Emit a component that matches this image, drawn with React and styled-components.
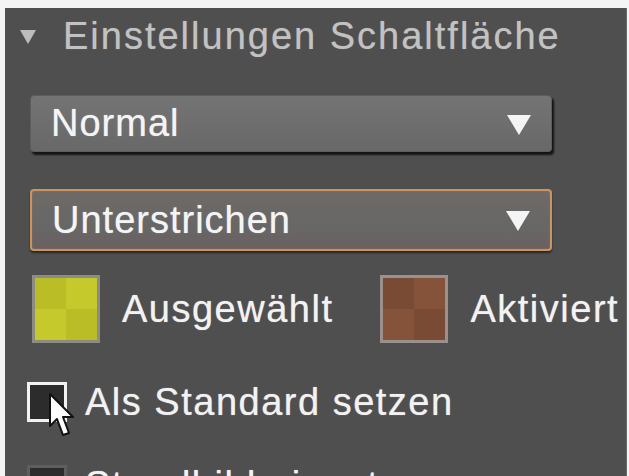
import styled, { createGlobalStyle } from "styled-components";

const Global = createGlobalStyle`
  html, body {
    margin: 0;
    background: #f4f4f4;
    overflow: hidden;
  }
  body {
    padding: 8px 0 0 5px;
    font-family: "Liberation Sans", Arial, sans-serif;
  }
`;

const Panel = styled.div`
  width: 621px;
  height: 468px;
  background: #4f4f4f;
  border-right: 1px solid #6a6a6a;
  display: flex;
  flex-direction: column;
  overflow: hidden;
  & > * {
    flex: none;
  }
`;

const Header = styled.div`
  height: 56px;
  display: flex;
  align-items: center;
  padding-left: 15px;
  gap: 27px;
  color: #c2c2c2;
  font-size: 38px;
  letter-spacing: 2px;
  text-shadow: 0 0 1px rgba(200, 200, 200, 0.5);
`;

const Caret = styled.span`
  width: 0;
  height: 0;
  border-left: 8px solid transparent;
  border-right: 8px solid transparent;
  border-top: 14px solid #bdbdbd;
  margin-top: 2px;
  flex: none;
`;

const Select = styled.div`
  margin: ${(p) => p.top}px 0 0 25px;
  width: 522px;
  height: ${(p) => p.h}px;
  box-sizing: border-box;
  display: flex;
  align-items: center;
  justify-content: space-between;
  padding: 0 20px 0 20px;
  border-radius: 4px;
  color: #f4f4f4;
  font-size: 38px;
  letter-spacing: 1px;
  text-shadow: 0 0 1px rgba(255, 255, 255, 0.6);
  ${(p) =>
    p.active
      ? `
    border: 2px solid #c9955f;
    background: linear-gradient(#6e6a66, #676767 60%, #6b6060);
    box-shadow: 0 2px 2px rgba(0,0,0,0.5), inset 0 0 2px rgba(200,150,100,0.4);
  `
      : `
    border: 1px solid #5c5c5c;
    background: linear-gradient(#747474, #686868);
    box-shadow: 2px 3px 2px rgba(0,0,0,0.75);
  `}
`;

const SelectArrow = styled.span`
  width: 0;
  height: 0;
  border-left: 12px solid transparent;
  border-right: 12px solid transparent;
  border-top: 20px solid #f4f4f4;
  margin-top: 2px;
`;

const SwatchRow = styled.div`
  margin: 24px 0 0 27px;
  display: flex;
  align-items: center;
  height: 68px;
`;

const Swatch = styled.div`
  width: 68px;
  height: 68px;
  box-sizing: border-box;
  border: 3px solid ${(p) => p.edge};
  background: conic-gradient(
    ${(p) => p.a} 0 25%,
    ${(p) => p.b} 0 50%,
    ${(p) => p.a} 0 75%,
    ${(p) => p.b} 0
  );
  flex: none;
`;

const SwatchLabel = styled.span`
  color: #f2f2f2;
  font-size: 38px;
  letter-spacing: 1.5px;
  text-shadow: 0 0 1px rgba(255, 255, 255, 0.6);
  margin: 0 ${(p) => p.after}px 0 22px;
  white-space: nowrap;
`;

const CheckRow = styled.div`
  margin: ${(p) => p.top}px 0 0 22px;
  display: flex;
  align-items: center;
  gap: 18px;
  height: 40px;
  position: relative;
`;

const Box = styled.div`
  width: 40px;
  height: 40px;
  box-sizing: border-box;
  border: 3px solid ${(p) => p.edge};
  background: #2c2c2c;
  flex: none;
`;

const CheckLabel = styled.span`
  color: #f2f2f2;
  font-size: 38px;
  letter-spacing: 1.5px;
  text-shadow: 0 0 1px rgba(255, 255, 255, 0.6);
  white-space: nowrap;
`;

const Pointer = styled.svg`
  position: absolute;
  left: 21px;
  top: 10px;
  width: 26px;
  height: 48px;
`;

export default function App() {
  return (
    <>
      <Global />
      <Panel>
        <Header>
          <Caret />
          <span>Einstellungen Schaltfläche</span>
        </Header>

        <Select top={31} h={57}>
          <span>Normal</span>
          <SelectArrow />
        </Select>

        <Select top={37} h={62} active>
          <span>Unterstrichen</span>
          <SelectArrow />
        </Select>

        <SwatchRow>
          <Swatch edge="#8c8c84" a="#c6c92c" b="#babd26" />
          <SwatchLabel after={47}>Ausgewählt</SwatchLabel>
          <Swatch edge="#9a908c" a="#84533a" b="#7a4b34" />
          <SwatchLabel after={0}>Aktiviert</SwatchLabel>
        </SwatchRow>

        <CheckRow top={39}>
          <Box edge="#f2f2f2" />
          <CheckLabel>Als Standard setzen</CheckLabel>
          <Pointer viewBox="0 0 26 48">
            <path
              d="M2 2 L2 34 L9 27 L15 43 L21 41 L15 25 L25 25 Z"
              fill="#ffffff"
              stroke="#111111"
              strokeWidth="2"
              strokeLinejoin="round"
            />
          </Pointer>
        </CheckRow>

        <CheckRow top={43}>
          <Box edge="#5e5e5e" />
          <CheckLabel>Standbild einsetzen</CheckLabel>
        </CheckRow>
      </Panel>
    </>
  );
}
